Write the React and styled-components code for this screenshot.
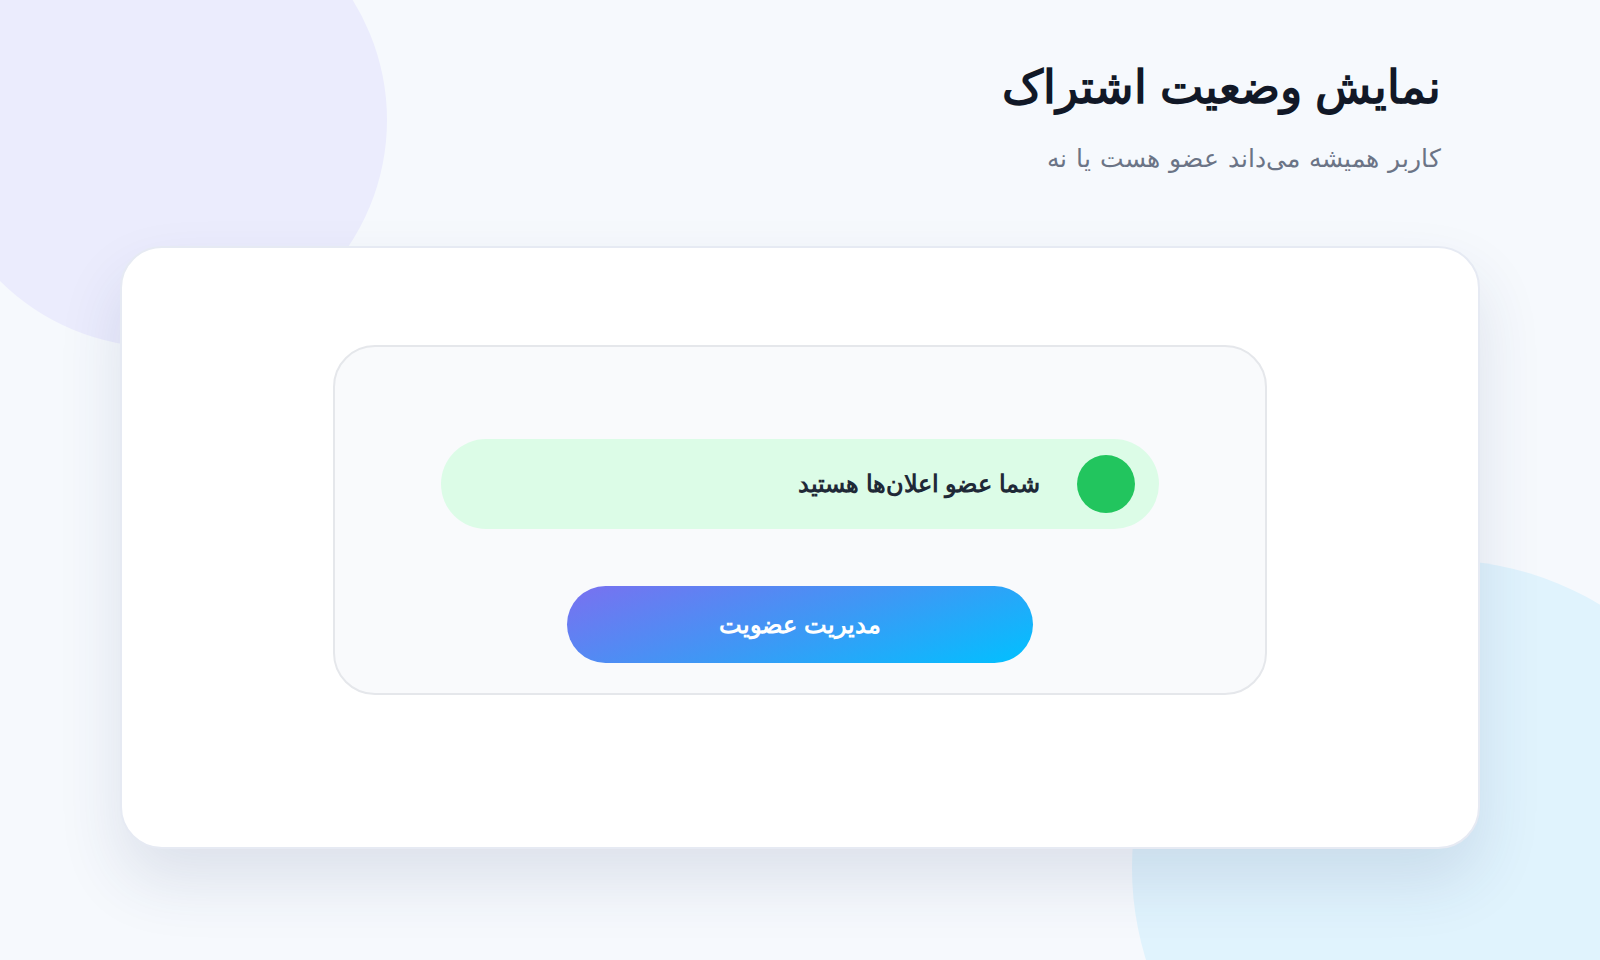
import React from "react";
import styled, { createGlobalStyle } from "styled-components";

const GlobalStyle = createGlobalStyle`
  html, body {
    margin: 0;
    padding: 0;
    background: #f6f9fd;
  }

  body {
    font-family: "Liberation Sans", Arial, sans-serif;
    overflow: hidden;
  }
`;

const Page = styled.div`
  position: relative;
  width: 100%;
  height: 960px;
  overflow: hidden;
  background: #f6f9fd;
  direction: rtl;
`;

const Blob = styled.div`
  position: absolute;
  border-radius: 50%;
  width: ${({ size }) => size}px;
  height: ${({ size }) => size}px;
  background: ${({ color }) => color};
  z-index: 0;
`;

const TopBlob = styled(Blob)`
  top: -107px;
  left: -67px;
`;

const BottomBlob = styled(Blob)`
  top: 560px;
  left: 1132px;
`;

const Container = styled.main`
  position: relative;
  z-index: 1;
  width: 1360px;
  margin: 0 auto;
  padding-top: 58px;
`;

const Header = styled.header`
  padding: 0 39px;
  display: flex;
  flex-direction: column;
  align-items: flex-start;
  gap: 26px;
  margin-bottom: 72px;
`;

const Title = styled.h1`
  margin: 0;
  font-size: 46px;
  font-weight: bold;
  line-height: 58px;
  color: #111827;
`;

const Subtitle = styled.p`
  margin: 0;
  font-size: 25px;
  line-height: 32px;
  word-spacing: 2px;
  color: #6b7486;
`;

const Card = styled.section`
  box-sizing: border-box;
  width: 1360px;
  height: 603px;
  padding: 97px 0 0;
  background: #ffffff;
  border: 2px solid #e6eaf3;
  border-radius: 42px;
  box-shadow: 0 32px 64px rgba(40, 60, 110, 0.12);
  display: flex;
  justify-content: center;
  align-items: flex-start;
`;

const Panel = styled.div`
  box-sizing: border-box;
  width: 934px;
  padding: 92px 106px 30px;
  background: #f9fafc;
  border: 2px solid #e5e7eb;
  border-radius: 42px;
  display: flex;
  flex-direction: column;
  align-items: center;
  gap: 57px;
`;

const StatusPill = styled.div`
  box-sizing: border-box;
  width: 100%;
  height: 90px;
  padding: 0 24px;
  border-radius: 45px;
  background: ${({ active }) => (active ? "#dcfce7" : "#fee2e2")};
  display: flex;
  align-items: center;
  gap: 37px;
`;

const Dot = styled.span`
  flex: none;
  width: 58px;
  height: 58px;
  border-radius: 50%;
  background: ${({ active }) => (active ? "#22c55e" : "#ef4444")};
`;

const StatusText = styled.span`
  font-size: 24px;
  font-weight: bold;
  color: #1f2937;
`;

const ManageButton = styled.button`
  width: 466px;
  height: 77px;
  border: none;
  border-radius: 39px;
  background: linear-gradient(160deg, #7a70f0 0%, #3f97f5 50%, #00c1ff 100%);
  color: #ffffff;
  font-family: "Liberation Sans", Arial, sans-serif;
  font-size: 24px;
  font-weight: bold;
  cursor: pointer;
`;

function App() {
  const isMember = true;

  return (
    <>
      <GlobalStyle />
      <Page>
        <TopBlob size={454} color="#ebecfd" />
        <BottomBlob size={616} color="#e0f3fd" />
        <Container>
          <Header>
            <Title>نمایش وضعیت اشتراک</Title>
            <Subtitle>کاربر همیشه می‌داند عضو هست یا نه</Subtitle>
          </Header>
          <Card>
            <Panel>
              <StatusPill active={isMember}>
                <Dot active={isMember} />
                <StatusText>
                  {isMember ? "شما عضو اعلان‌ها هستید" : "شما عضو اعلان‌ها نیستید"}
                </StatusText>
              </StatusPill>
              <ManageButton type="button">مدیریت عضویت</ManageButton>
            </Panel>
          </Card>
        </Container>
      </Page>
    </>
  );
}

export default App;
